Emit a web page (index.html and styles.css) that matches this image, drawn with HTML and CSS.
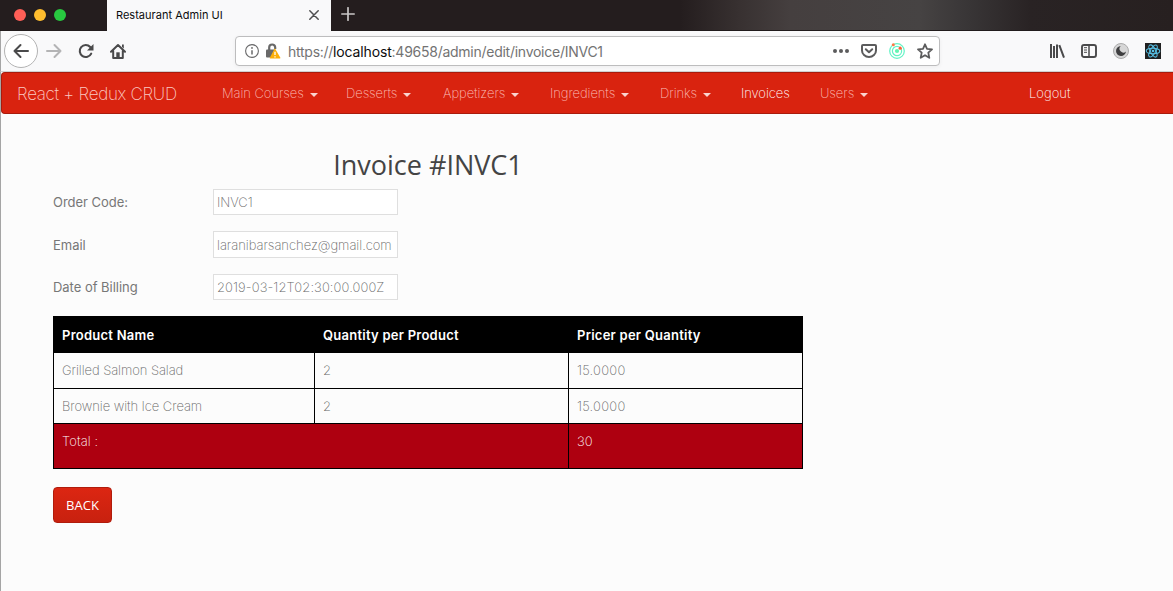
FILE: index.html
```html
<!DOCTYPE html>
<html lang="en">
<head>
<meta charset="utf-8">
<title>Restaurant Admin UI</title>
<link rel="stylesheet" href="styles.css">
</head>
<body>
<div class="window">
  <header class="tabbar">
    <div class="lights"><i class="light red"></i><i class="light yellow"></i><i class="light green"></i></div>
    <div class="tab">
      <span class="tab-title">Restaurant Admin UI</span>
      <svg class="tab-close" width="10" height="10" viewBox="0 0 10 10" fill="none" stroke="#4f4f50" stroke-width="1.5" stroke-linecap="round"><path d="M.8.8l8.4 8.4M9.2.8L.8 9.200"/></svg>
    </div>
    <svg class="tab-new" width="14" height="14" viewBox="0 0 14 14" fill="none" stroke="#c9c6c6" stroke-width="1.700" stroke-linecap="round"><path d="M7 .8v12.400M.8 7h12.400"/></svg>
  </header>
  <div class="toolbar">
    <div class="back-circle"><svg width="16" height="16" viewBox="0 0 16 16" fill="none" stroke="#4a4a4b" stroke-width="2" stroke-linecap="round" stroke-linejoin="round"><path d="M15 8H1.500M7.500 2L1.500 8l6 6"/></svg></div>
    <svg class="forward" width="16" height="16" viewBox="0 0 16 16" fill="none" stroke="#b4b4b5" stroke-width="2" stroke-linecap="round" stroke-linejoin="round"><path d="M1 8h13.500M8.500 2l6 6-6 6"/></svg>
    <svg class="reload" width="16" height="16" viewBox="0 0 16 16" fill="none" stroke="#4a4a4b" stroke-width="2.100" stroke-linecap="round"><path d="M13.200 10.600A6 6 0 1 1 12.200 4"/><path d="M15.500 1v6.500H9z" fill="#4a4a4b" stroke="none"/></svg>
    <svg class="home" width="16" height="16" viewBox="0 0 16 16" fill="none" stroke="#4a4a4b" stroke-width="2" stroke-linecap="round" stroke-linejoin="round"><path d="M1 8.700L8 2l7 6.700M3.200 8V15h9.600V8"/><path d="M6.300 14.500V9.300h3.400v5.200z" fill="#4a4a4b" stroke="none"/><path d="M12 1.500h1.800v4L12 4z" fill="#4a4a4b" stroke="none"/></svg>
    <div class="urlbar">
      <svg class="info" width="14" height="14" viewBox="0 0 14 14" fill="none" stroke="#69696a"><circle cx="7" cy="7" r="6.400" stroke-width="1.100"/><path d="M7 6.200v4.200" stroke-width="1.500"/><circle cx="7" cy="3.900" r=".95" fill="#69696a" stroke="none"/></svg>
      <svg class="lock" width="16" height="16" viewBox="0 0 16 16"><path d="M4.200 7V4.500a3 3 0 0 1 6 0V6" fill="none" stroke="#696969" stroke-width="2.200"/><path d="M1 7.500q0-1 1-1h7.500L6 14.500H2q-1 0-1-1z" fill="#696969"/><path d="M10 5.600L15.400 14.800q.2.700-.6.700H5.300q-.8 0-.5-.7L9.400 5.900q.3-.6.600-.3z" fill="#fcae08"/><path d="M10 8.800v3.200M10 13.200v1.200" stroke="#fff" stroke-width="1.300"/></svg>
      <span class="url">https://<b>localhost</b>:49658/admin/edit/invoice/INVC1</span>
      <div class="url-actions">
        <svg width="16" height="16" viewBox="0 0 16 16" fill="#5c5c5d"><circle cx="2" cy="8" r="2"/><circle cx="8" cy="8" r="2"/><circle cx="14" cy="8" r="2"/></svg>
        <svg width="16" height="16" viewBox="0 0 16 16" fill="none" stroke="#5c5c5d" stroke-width="2" stroke-linecap="round" stroke-linejoin="round"><path d="M2 2h12q1 0 1 1v4.500a7 6.500 0 0 1-14 0V3q0-1 1-1z"/><path d="M4.800 6.300L8 9.300l3.200-3"/></svg>
        <svg width="16" height="16" viewBox="0 0 16 16" fill="none" stroke="#63f3c5" stroke-width="1.200"><circle cx="8" cy="8" r="7.300"/><circle cx="8" cy="8" r="4.600"/><circle cx="8" cy="8" r="2.100" fill="#62f5b3" stroke="none"/><circle cx="4.300" cy="1.700" r="1.500" fill="#ff7846" stroke="none"/><circle cx="11.200" cy="5.200" r="1.600" fill="#ff5b37" stroke="none"/></svg>
        <svg width="16" height="16" viewBox="0 0 16 16" fill="none" stroke="#5c5c5d" stroke-width="1.800" stroke-linejoin="round"><path d="M8 1.300l2 4.500 5 .5-3.700 3.300 1 5.200L8 12.200l-4.300 2.600 1-5.200L1 6.300l5-.5z"/></svg>
      </div>
    </div>
    <div class="extensions">
      <svg width="16" height="16" viewBox="0 0 16 16" stroke="#4a4a4b" fill="none" stroke-width="2"><path d="M2 1v14M5 3v12M8 1.500V15M10.300 2.200L15 14.600"/></svg>
      <svg width="16" height="16" viewBox="0 0 16 16" stroke="#4a4a4b" fill="none" stroke-width="1.900"><rect x="1" y="2" width="14" height="12" rx="2"/><path d="M8 2v12" stroke-width="1.500"/><path d="M3 4.700h3M3 7h3M3 9.300h3" stroke-width="1"/></svg>
      <svg width="16" height="16" viewBox="0 0 16 16"><circle cx="8" cy="8" r="7.500" fill="#d6d6d6" stroke="#aaa"/><path d="M7.800 3A5 5 0 1 0 13 8.500 3.600 3.600 0 0 1 7.800 3z" fill="#3e3e3f"/></svg>
      <svg width="16" height="16" viewBox="0 0 16 16" fill="none" stroke="#56bfe4" stroke-width="1.050"><path d="M0 0h16v16H0z" fill="#202020" stroke="none"/><ellipse cx="8" cy="8" rx="6.800" ry="2.700"/><ellipse cx="8" cy="8" rx="6.800" ry="2.700" transform="rotate(60 8 8)"/><ellipse cx="8" cy="8" rx="6.800" ry="2.700" transform="rotate(120 8 8)"/><circle cx="8" cy="8" r="1.300" fill="#56bfe4" stroke="none"/></svg>
    </div>
  </div>
  <main class="page">
    <nav class="navbar">
      <a class="brand">React + Redux CRUD</a>
      <div class="menu">
        <a class="menu-item"><span>Main Courses</span><i class="caret"></i></a>
        <a class="menu-item"><span>Desserts</span><i class="caret"></i></a>
        <a class="menu-item"><span>Appetizers</span><i class="caret"></i></a>
        <a class="menu-item"><span>Ingredients</span><i class="caret"></i></a>
        <a class="menu-item"><span>Drinks</span><i class="caret"></i></a>
        <a class="menu-item active"><span>Invoices</span></a>
        <a class="menu-item"><span>Users</span><i class="caret"></i></a>
      </div>
      <a class="logout">Logout</a>
    </nav>
    <section class="invoice">
      <h1 class="title">Invoice #INVC1</h1>
      <div class="fields">
        <label class="label">Order Code:</label><div class="input">INVC1</div>
        <label class="label">Email</label><div class="input tall">laranibarsanchez@gmail.com</div>
        <label class="label">Date of Billing</label><div class="input date">2019-03-12T02:30:00.000Z</div>
      </div>
      <table class="items">
        <colgroup><col class="c-name"><col class="c-qty"><col class="c-price"></colgroup>
        <thead><tr><th>Product Name</th><th>Quantity per Product</th><th>Pricer per Quantity</th></tr></thead>
        <tbody>
          <tr class="first"><td>Grilled Salmon Salad</td><td>2</td><td class="num">15.0000</td></tr>
          <tr class="second"><td>Brownie with Ice Cream</td><td>2</td><td class="num">15.0000</td></tr>
          <tr class="total"><td colspan="2">Total :</td><td>30</td></tr>
        </tbody>
      </table>
      <button class="back">BACK</button>
    </section>
  </main>
</div>
</body>
</html>
```
FILE: styles.css
```css
* { box-sizing: border-box; }
body { margin: 0; background: #fcfcfc; overflow: hidden; font-family: Inter, sans-serif; }
svg { display: block; flex: none; }
.window { width: 1173px; height: 591px; display: flex; flex-direction: column; }

.tabbar {
  height: 31px; display: flex; align-items: center; border-bottom: 1px solid #211b1c;
  background: linear-gradient(90deg, #241d1e 0, #241d1e 680px, #383131 740px, #453f3f 790px, #464343 920px, #383536 970px, #292324 1030px, #272020 1173px);
}
.lights { width: 107px; padding-left: 14px; display: flex; gap: 8px; }
.light { width: 12px; height: 12px; border-radius: 50%; }
.red { background: #ff5f57; }
.yellow { background: #ffbd2e; }
.green { background: #28c940; }
.tab { width: 224px; height: 31px; padding: 0 12px 1px 9px; background: #f9f9fa; display: flex; align-items: center; justify-content: space-between; align-self: flex-start; }
.tab-title { font-size: 11px; color: #0c0c0d; letter-spacing: .02px; }
.tab-new { margin: -2px 0 0 10px; }

.toolbar { height: 41px; background: #f9f9fa; border-bottom: 1px solid #d0cfd0; border-left: 1px solid #a5a5a5; display: flex; align-items: center; padding-left: 3px; }
.back-circle { width: 34px; height: 34px; border: 1px solid #b3b3b3; border-radius: 50%; background: #fff; display: flex; align-items: center; justify-content: center; }
.forward { margin-left: 8px; }
.reload { margin-left: 16px; }
.home { margin-left: 16px; }
.urlbar { width: 705px; height: 30px; margin-left: 109px; border: 1px solid #bdbdbe; border-radius: 4px; background: #fff; box-shadow: 0 1px 4px rgba(0,0,0,.05); display: flex; align-items: center; padding: 0 6px 0 9px; }
.lock { margin-left: 6px; }
.url { margin-left: 7px; font-size: 14px; letter-spacing: -.26px; color: #737373; white-space: nowrap; }
.url b { font-weight: 400; color: #0c0c0d; letter-spacing: -.15px; }
.url-actions { margin-left: auto; display: flex; gap: 12px; }
.extensions { margin-left: 109px; display: flex; gap: 16px; }

.page { flex: 1; border-left: 1px solid #a5a5a5; background: #fcfcfc; }
.navbar { height: 42px; background: #d9230f; border: 1px solid #a91b0c; border-right: 0; border-radius: 4px 0 0 4px; display: flex; align-items: center; padding-left: 15px; font-weight: 200; color: #f9bdb6; white-space: nowrap; }
.brand { width: 205px; font-size: 17px; letter-spacing: -.3px; color: #fbc8c2; padding-top: 2px; }
.menu { display: grid; grid-template-columns: 124px 97px 107px 110px 81px 79px 209px; font-size: 13px; letter-spacing: -.08px; }
.menu-item { display: flex; align-items: center; gap: 6px; }
.caret { border: 4px solid transparent; border-top-color: #fad3cf; border-bottom: 0; margin-top: 4px; }
.active, .logout { color: #fff; }
.logout { font-size: 13px; }

.invoice { width: 750px; margin-left: 52px; padding-top: 34px; font-size: 13px; }
.title { margin: 0; height: 41px; text-align: center; font: 400 27px/34px "Open Sans", sans-serif; color: #444; }
.fields { display: grid; grid-template-columns: 160px 185px; grid-template-rows: 26px 27px 26px; row-gap: 16px; align-items: center; }
.label { color: #777; letter-spacing: -.03px; }
.input { height: 26px; border: 1px solid #dfdfdf; background: #fff; padding-left: 3px; line-height: 25px; font-weight: 200; color: #666; white-space: nowrap; letter-spacing: -.03px; }
.tall { height: 27px; line-height: 26px; }
.date { letter-spacing: .1px; }
.items { margin-top: 16px; width: 750px; border-collapse: collapse; table-layout: fixed; }
.c-name { width: 261px; }
.c-qty { width: 254px; }
.items th, .items td { height: 36px; padding: 0 8px; border: 1px solid #000; text-align: left; }
.items th { background: #000; color: #fff; font-weight: 600; letter-spacing: .25px; padding-top: 1px; }
.items td { color: #666; font-weight: 200; letter-spacing: -.07px; }
.items .first td { padding-bottom: 1px; }
.items .num { letter-spacing: .25px; }
.items .second td { height: 35px; }
.items .total td { height: 45px; background: #ae0010; color: #fff; vertical-align: top; padding-top: 9px; letter-spacing: .1px; }
.back { display: block; margin-top: 18px; width: 59px; height: 36px; border: 1px solid #b01c0c; border-radius: 4px; background: linear-gradient(#dc2612, #c8210f); color: #fff; font: 400 13px "Open Sans", sans-serif; padding: 0; }
```
